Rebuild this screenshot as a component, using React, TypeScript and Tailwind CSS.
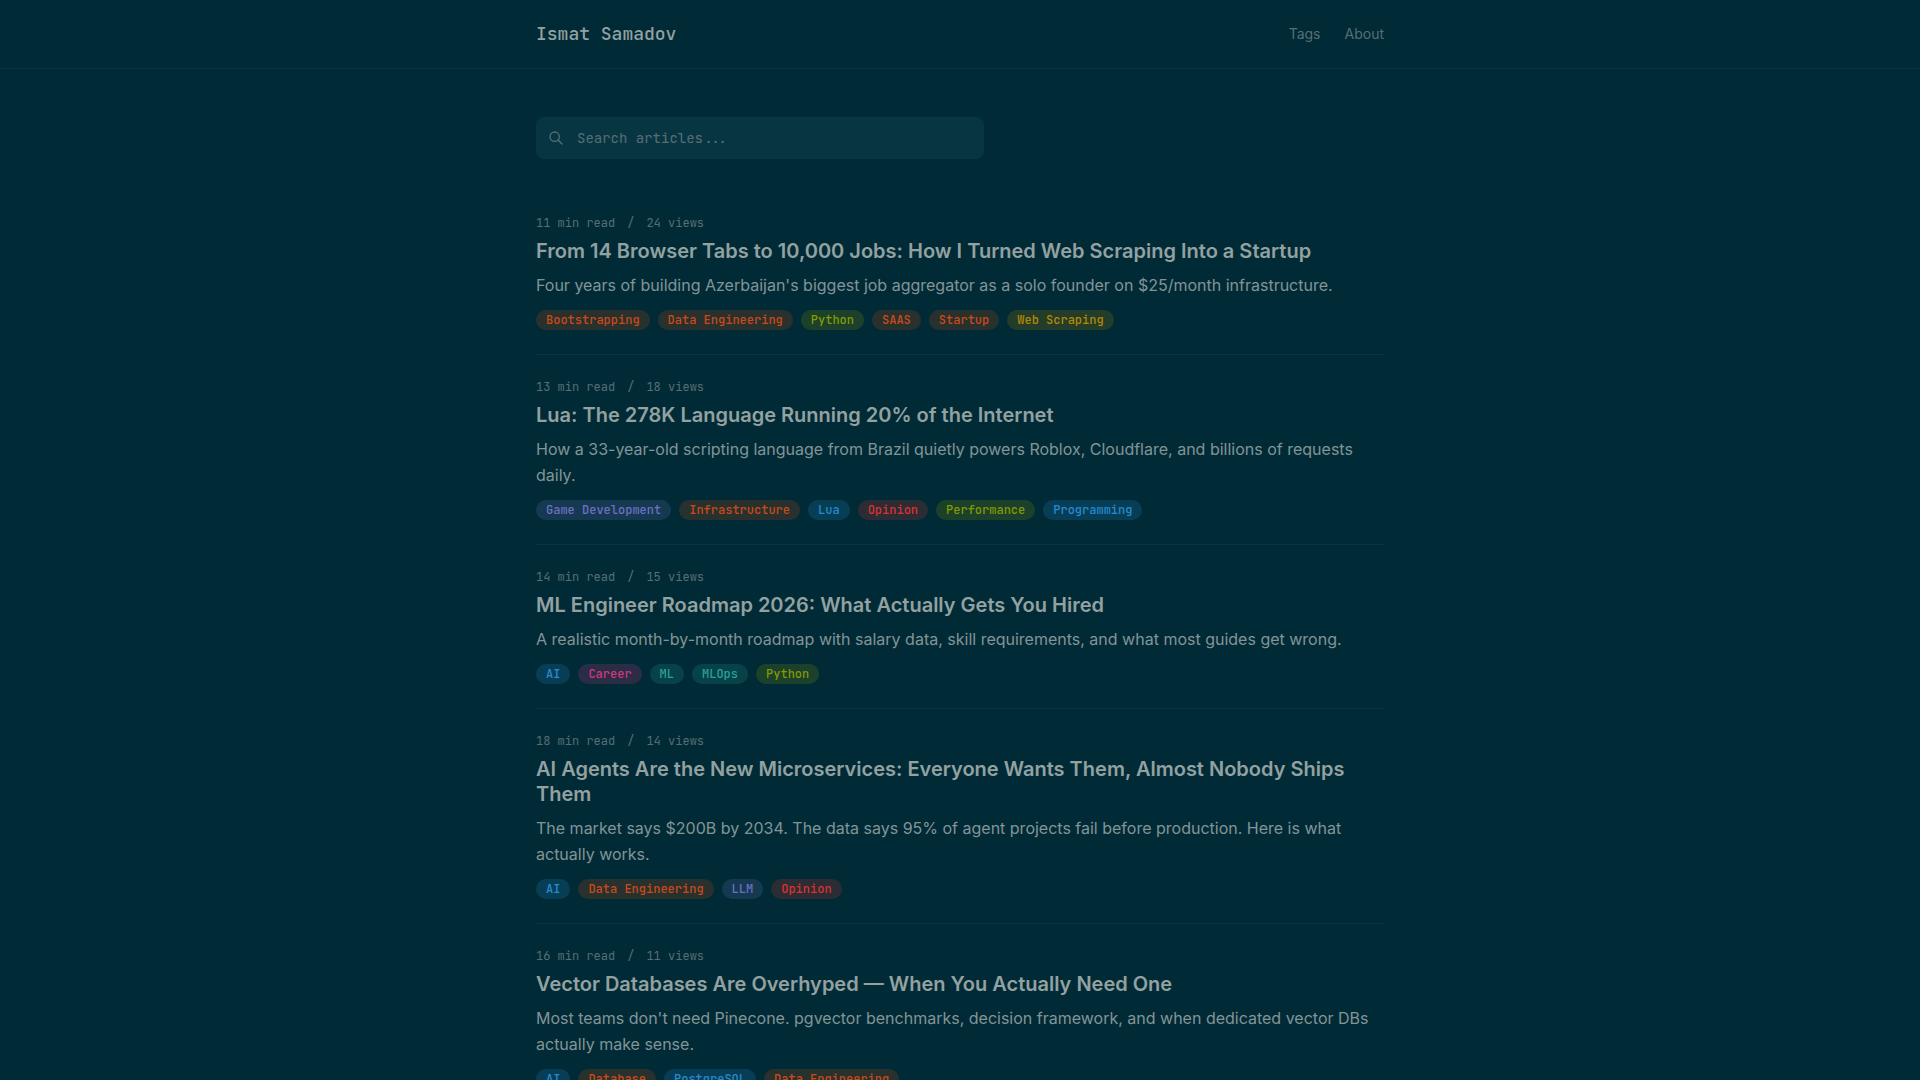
import React, { useState } from 'react';

type TagColor = 'orange' | 'green' | 'yellow' | 'violet' | 'blue' | 'red' | 'magenta' | 'cyan';

interface Article {
  title: string;
  description: string;
  minutes: number;
  views: number;
  tags: string[];
}

const TAG_STYLES: Record<TagColor, string> = {
  orange: 'bg-[#cb4b16]/20 text-[#cb4b16]',
  green: 'bg-[#859900]/20 text-[#859900]',
  yellow: 'bg-[#b58900]/20 text-[#b58900]',
  violet: 'bg-[#6c71c4]/20 text-[#6c71c4]',
  blue: 'bg-[#268bd2]/20 text-[#268bd2]',
  red: 'bg-[#dc322f]/20 text-[#dc322f]',
  magenta: 'bg-[#d33682]/20 text-[#d33682]',
  cyan: 'bg-[#2aa198]/20 text-[#2aa198]',
};

const TAG_COLORS: Record<string, TagColor> = {
  AI: 'blue',
  Bootstrapping: 'orange',
  Career: 'magenta',
  'Data Engineering': 'orange',
  Database: 'orange',
  'Game Development': 'violet',
  Infrastructure: 'orange',
  LLM: 'violet',
  Lua: 'blue',
  ML: 'cyan',
  MLOps: 'cyan',
  Opinion: 'red',
  Performance: 'green',
  PostgreSQL: 'blue',
  Programming: 'blue',
  Python: 'green',
  SAAS: 'orange',
  Startup: 'orange',
  'Web Scraping': 'yellow',
};

const ARTICLES: Article[] = [
  {
    title: 'From 14 Browser Tabs to 10,000 Jobs: How I Turned Web Scraping Into a Startup',
    description:
      "Four years of building Azerbaijan's biggest job aggregator as a solo founder on $25/month infrastructure.",
    minutes: 11,
    views: 24,
    tags: ['Bootstrapping', 'Data Engineering', 'Python', 'SAAS', 'Startup', 'Web Scraping'],
  },
  {
    title: 'Lua: The 278K Language Running 20% of the Internet',
    description:
      'How a 33-year-old scripting language from Brazil quietly powers Roblox, Cloudflare, and billions of requests daily.',
    minutes: 13,
    views: 18,
    tags: ['Game Development', 'Infrastructure', 'Lua', 'Opinion', 'Performance', 'Programming'],
  },
  {
    title: 'ML Engineer Roadmap 2026: What Actually Gets You Hired',
    description:
      'A realistic month-by-month roadmap with salary data, skill requirements, and what most guides get wrong.',
    minutes: 14,
    views: 15,
    tags: ['AI', 'Career', 'ML', 'MLOps', 'Python'],
  },
  {
    title: 'AI Agents Are the New Microservices: Everyone Wants Them, Almost Nobody Ships Them',
    description:
      'The market says $200B by 2034. The data says 95% of agent projects fail before production. Here is what actually works.',
    minutes: 18,
    views: 14,
    tags: ['AI', 'Data Engineering', 'LLM', 'Opinion'],
  },
  {
    title: 'Vector Databases Are Overhyped — When You Actually Need One',
    description:
      "Most teams don't need Pinecone. pgvector benchmarks, decision framework, and when dedicated vector DBs actually make sense.",
    minutes: 16,
    views: 11,
    tags: ['AI', 'Database', 'PostgreSQL', 'Data Engineering'],
  },
];

const MONO = "font-['JetBrains_Mono','DejaVu_Sans_Mono',monospace]";

const Header: React.FC = () => (
  <header className="border-b border-[#073642]">
    <div className="mx-auto flex max-w-4xl items-center justify-between px-6 py-5">
      <a href="#" className={`${MONO} text-lg font-medium text-[#93a1a1]`}>
        Ismat Samadov
      </a>
      <nav className="flex gap-6 text-sm text-[#586e75]">
        <a href="#tags" className="transition-colors hover:text-[#93a1a1]">
          Tags
        </a>
        <a href="#about" className="transition-colors hover:text-[#93a1a1]">
          About
        </a>
      </nav>
    </div>
  </header>
);

const SearchBox: React.FC<{ value: string; onChange: (value: string) => void }> = ({ value, onChange }) => (
  <div className="relative mb-8 max-w-md">
    <svg
      className="pointer-events-none absolute top-1/2 left-3 size-4 -translate-y-1/2 text-[#586e75]"
      viewBox="0 0 24 24"
      fill="none"
      stroke="currentColor"
      strokeWidth={2}
      strokeLinecap="round"
      strokeLinejoin="round"
      aria-hidden="true"
    >
      <path d="M21 21l-6-6m2-5a7 7 0 11-14 0 7 7 0 0114 0z" />
    </svg>
    <input
      type="text"
      value={value}
      onChange={(event) => onChange(event.target.value)}
      placeholder="Search articles..."
      aria-label="Search articles"
      className={`${MONO} block w-full rounded-lg border border-[#073642] bg-[#073642] py-2.5 pr-4 pl-10 text-sm text-[#93a1a1] placeholder:text-[#586e75] focus:border-[#268bd2] focus:outline-none`}
    />
  </div>
);

const ArticleItem: React.FC<{ article: Article }> = ({ article }) => (
  <article className="border-b border-[#073642] py-6">
    <div className={`${MONO} mb-2 flex gap-3 text-xs text-[#586e75]`}>
      <span>{article.minutes} min read</span>
      <span>/</span>
      <span>{article.views} views</span>
    </div>
    <h2 className="mb-2 text-xl leading-tight font-semibold text-[#93a1a1]">
      <a href="#" className="transition-colors hover:text-[#268bd2]">
        {article.title}
      </a>
    </h2>
    <p className="mb-3 leading-relaxed text-[#839496]">{article.description}</p>
    <div className="flex flex-wrap gap-2">
      {article.tags.map((tag) => (
        <a
          key={tag}
          href="#tags"
          className={`${MONO} rounded-full px-2.5 py-0.5 text-xs font-medium ${TAG_STYLES[TAG_COLORS[tag]]}`}
        >
          {tag}
        </a>
      ))}
    </div>
  </article>
);

export default function App() {
  const [query, setQuery] = useState('');
  const term = query.trim().toLowerCase();
  const visible = ARTICLES.filter(
    (article) =>
      article.title.toLowerCase().includes(term) ||
      article.description.toLowerCase().includes(term) ||
      article.tags.some((tag) => tag.toLowerCase().includes(term))
  );

  return (
    <div className="min-h-screen bg-[#002b36] font-['Inter',sans-serif] antialiased">
      <Header />
      <main className="mx-auto max-w-4xl px-6 py-12">
        <SearchBox value={query} onChange={setQuery} />
        {visible.map((article) => (
          <ArticleItem key={article.title} article={article} />
        ))}
      </main>
    </div>
  );
}
